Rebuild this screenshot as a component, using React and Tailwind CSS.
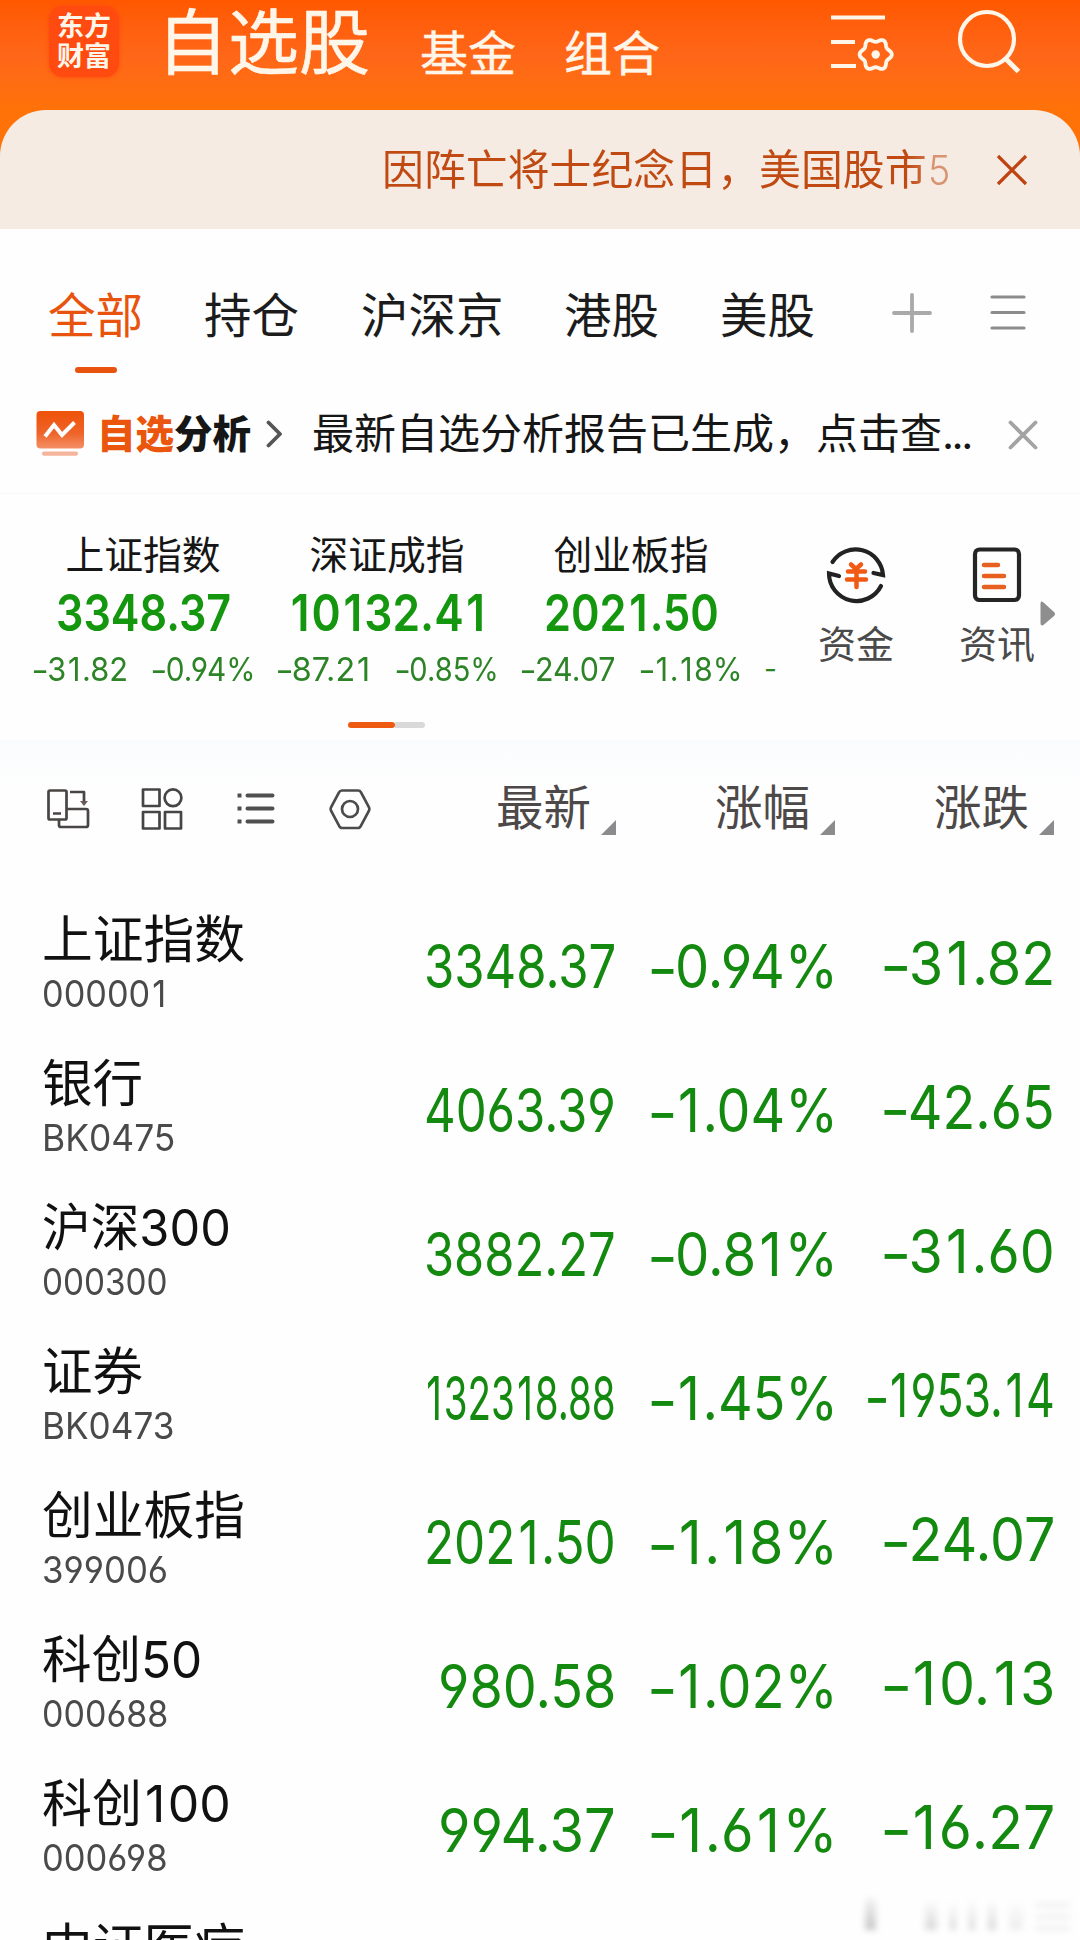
import { useLayoutEffect, useRef, useState } from "react";

/* Text squeezed or stretched horizontally to an exact width. */
function Fit({ width, right, className = "", children }) {
  const ref = useRef(null);
  const [scale, setScale] = useState(1);
  useLayoutEffect(() => {
    setScale(width / ref.current.offsetWidth);
  }, [width]);
  return (
    <span className={`flex ${right ? "justify-end" : "justify-start"} ${className}`} style={{ width }}>
      <span
        ref={ref}
        className={`inline-block shrink-0 whitespace-nowrap ${right ? "origin-right" : "origin-left"}`}
        style={{ transform: `scaleX(${scale})` }}
      >
        {children}
      </span>
    </span>
  );
}

/* A figure with a long, low minus sign and some air around each 1. */
function Num({ value }) {
  return value.split(/(1|-)/).map((part, i) => {
    if (part === "1") return <span key={i} className="pr-[0.05em] pl-[0.06em]">1</span>;
    if (part === "-") return <span key={i} className="inline-block translate-y-[0.035em] scale-x-125">-</span>;
    return part;
  });
}

/* Outline of the six-lobed settings gear. */
const gearPath =
  Array.from({ length: 72 }, (_, i) => {
    const a = (i * Math.PI) / 36;
    const r = 14.4 + 1.7 * Math.cos(6 * a);
    return `${i ? "L" : "M"}${(46.7 + r * Math.cos(a)).toFixed(2)} ${(43.5 + r * Math.sin(a)).toFixed(2)}`;
  }).join("") + "Z";

const indices = [
  { name: "上证指数", value: "3348.37", w: 175, diff: "-31.82", dw: 95, pct: "-0.94%" },
  { name: "深证成指", value: "10132.41", w: 199, diff: "-87.21", dw: 95, pct: "-0.85%" },
  { name: "创业板指", value: "2021.50", w: 175, diff: "-24.07", dw: 95, pct: "-1.18%" },
];

const rows = [
  { name: "上证指数", nw: 203, code: "000001", cw: 126, last: "3348.37", lw: 192, pct: "-0.94%", diff: "-31.82", dw: 172 },
  { name: "银行", nw: 101, code: "BK0475", cw: 133, last: "4063.39", lw: 192, pct: "-1.04%", diff: "-42.65", dw: 172 },
  { name: "沪深300", nw: 189, code: "000300", cw: 126, last: "3882.27", lw: 192, pct: "-0.81%", diff: "-31.60", dw: 172 },
  { name: "证券", nw: 101, code: "BK0473", cw: 133, last: "132318.88", lw: 192, pct: "-1.45%", diff: "-1953.14", dw: 188 },
  { name: "创业板指", nw: 203, code: "399006", cw: 126, last: "2021.50", lw: 192, pct: "-1.18%", diff: "-24.07", dw: 172 },
  { name: "科创50", nw: 160, code: "000688", cw: 126, last: "980.58", lw: 178, pct: "-1.02%", diff: "-10.13", dw: 172 },
  { name: "科创100", nw: 189, code: "000698", cw: 126, last: "994.37", lw: 178, pct: "-1.61%", diff: "-16.27", dw: 172 },
  { name: "中证医疗", nw: 203 },
];

function Header() {
  return (
    <header className="flex h-[110px] items-start text-[#fff6ea]">
      <div className="mt-[6px] ml-[49px] flex h-[71px] w-[70px] flex-col items-center rounded-[14px] bg-[#ff4a10] pt-[6px] text-[27px] leading-[30px] font-bold shadow-[0_0_4px_#ff4a10]">
        <span>东方</span>
        <span>财富</span>
      </div>
      <div className="ml-[38px] w-[224px] text-[71px] leading-[84px] whitespace-nowrap [-webkit-text-stroke:0.6px]">自选股</div>
      <div className="mt-[30px] ml-[39px] w-[100px] text-[48px] leading-[48px] [-webkit-text-stroke:0.4px]">基金</div>
      <div className="mt-[30px] ml-[44px] w-[100px] text-[48px] leading-[48px] [-webkit-text-stroke:0.4px]">组合</div>
      <svg className="mt-[11px] ml-[165px] h-[64px] w-[66px]" viewBox="0 0 66 64" fill="none" stroke="currentColor" strokeWidth="4.200">
        <path d="M2 6.500h54M2 31h24M2 55h25" />
        <path strokeWidth="3.800" strokeLinejoin="round" d={gearPath} />
        <circle cx="46.700" cy="43.500" r="4.200" fill="currentColor" stroke="none" />
      </svg>
      <svg className="mt-[8px] ml-[61px] h-[68px] w-[66px]" viewBox="0 0 66 68" fill="none" stroke="currentColor" strokeWidth="4.200">
        <circle cx="31" cy="31" r="27" />
        <path d="M49 50l13.500 13.500" strokeWidth="5" />
      </svg>
    </header>
  );
}

function Notice() {
  return (
    <div className="flex h-[119px] items-center rounded-t-[46px] bg-[#f5ebe3] leading-[56px] whitespace-nowrap">
      <div className="ml-[382px] w-[546px] bg-linear-to-r from-[#c04a12] from-96% to-[#c04a12]/75 to-100% bg-clip-text text-[41.900px] text-transparent">
        因阵亡将士纪念日，美国股市
      </div>
      <Fit width={22} className="text-[41px] font-light text-[#c04a12]/55">5</Fit>
      <svg className="ml-[46px] h-[32px] w-[32px]" viewBox="0 0 32 32" stroke="#bf4310" strokeWidth="3.200">
        <path d="M2 2l28 28M30 2L2 30" />
      </svg>
    </div>
  );
}

function Tabs() {
  return (
    <nav className="flex h-[144px] items-start pt-[55px] text-[47.500px] leading-[64px] whitespace-nowrap text-[#1c1c1c]">
      <div className="ml-[48px] flex w-[95px] flex-col items-center text-[#e8540e]">
        <span>全部</span>
        <span className="mt-[19px] h-[6px] w-[42px] rounded-full bg-[#e8540e]" />
      </div>
      <span className="ml-[61px] w-[95px]">持仓</span>
      <span className="ml-[62px] w-[143px]">沪深京</span>
      <span className="ml-[60px] w-[95px]">港股</span>
      <span className="ml-[61px] w-[95px]">美股</span>
      <svg className="mt-[9px] ml-[77px] h-[40px] w-[40px]" viewBox="0 0 40 40" stroke="#a9a9a9" strokeWidth="3.800" strokeLinecap="round">
        <path d="M20 2v36M2 20h36" />
      </svg>
      <svg className="mt-[9px] ml-[58px] h-[40px] w-[36px]" viewBox="0 0 36 40" stroke="#8c8c8c" strokeWidth="3.200" strokeLinecap="round">
        <path d="M2 4h32M2 19.500h32M2 35h32" />
      </svg>
    </nav>
  );
}

function Analysis() {
  return (
    <section className="flex h-[121px] items-start border-b border-[#f8f8f8] pt-[33px] leading-[56px] whitespace-nowrap text-[#161616]">
      <svg className="mt-[4px] ml-[36px] h-[50px] w-[49px]" viewBox="0 0 49 50" fill="none">
        <defs>
          <linearGradient id="board" x1="0" y1="0" x2="0" y2="1">
            <stop offset="0" stopColor="#ee5208" />
            <stop offset=".6" stopColor="#ef642a" />
            <stop offset="1" stopColor="#f49067" />
          </linearGradient>
        </defs>
        <rect x=".5" y="1" width="47.500" height="37.500" rx="4" fill="url(#board)" />
        <rect x="6" y="41.500" width="36" height="4.300" rx="2" fill="#f6b49c" />
        <path d="M9 26.500l9-11.500 8 10L38.500 12.500" stroke="#fff" strokeWidth="4" />
      </svg>
      <div className="ml-[12px] w-[154px] text-[38.500px] font-black">
        <span className="text-[#ea560e]">自选</span>分析
      </div>
      <svg className="mt-[14px] ml-[15px] h-[28px] w-[18px]" viewBox="0 0 18 28" fill="none" stroke="#555" strokeWidth="3.800" strokeLinecap="round" strokeLinejoin="round">
        <path d="M2.500 2.500L14 14 2.500 25.500" />
      </svg>
      <div className="ml-[28px] w-[660px] text-[42px]">
        最新自选分析报告已生成，点击查<span className="tracking-[-2.500px]">...</span>
      </div>
      <svg className="mt-[14px] ml-[36px] h-[30px] w-[30px]" viewBox="0 0 30 30" stroke="#a3a3a3" strokeWidth="3.800" strokeLinecap="round">
        <path d="M2.500 2.500l25 25M27.500 2.500l-25 25" />
      </svg>
    </section>
  );
}

function IndexStrip() {
  return (
    <section className="h-[246px]">
      <div className="flex h-[219px] items-start">
        {indices.map((i) => (
          <div key={i.name} className="flex w-[244px] shrink-0 translate-x-[21px] flex-col items-center pt-[37px]">
            <span className="text-[38.800px] leading-[48px] text-[#161616]">{i.name}</span>
            <Fit width={i.w} className="mt-[6px] text-[50.500px] leading-[56px] font-[570] text-[#14960f]"><Num value={i.value} /></Fit>
            <div className="mt-[8px] flex w-[220px] text-[33px] leading-[40px] text-[#2c8427]">
              <Fit width={i.dw}><Num value={i.diff} /></Fit>
              <Fit width={103} className="ml-[24px]"><Num value={i.pct} /></Fit>
            </div>
          </div>
        ))}
        <span className="mt-[155px] ml-[32px] w-[14px] shrink-0 text-[28px] leading-[40px] text-[#2c8427]">-</span>
        <div className="mt-[48px] ml-[39px] flex w-[78px] shrink-0 flex-col items-center text-[38px] leading-[50px] whitespace-nowrap text-[#4a4a4a]">
          <svg className="h-[64px] w-[62px]" viewBox="0 0 62 64" fill="none" stroke="#222" strokeWidth="4.200" strokeLinecap="round">
            <path d="M7.500 20A27.500 27.500 0 0 1 58 33L48.500 31M56 44A27.500 27.500 0 0 1 4 31.500L14 34" />
            <path stroke="#f05a14" strokeWidth="4.500" d="M26 22.500l5 4.500 5-4.500M23 29.500h17M22 37.500h19M31.500 26v19" />
          </svg>
          <span className="mt-[13px]">资金</span>
        </div>
        <div className="mt-[49px] ml-[63px] flex w-[78px] shrink-0 flex-col items-center text-[38px] leading-[50px] whitespace-nowrap text-[#4a4a4a]">
          <svg className="h-[64px] w-[50px]" viewBox="0 0 50 64" fill="none" stroke="#252525" strokeWidth="4.200">
            <rect x="3" y="6.500" width="44" height="50.500" rx="4.500" />
            <path stroke="#e8601f" strokeWidth="4.500" strokeLinecap="round" d="M12 22h14M12 33h20M12 44h20" />
          </svg>
          <span className="mt-[12px]">资讯</span>
        </div>
        <svg className="mt-[106px] ml-[3px] h-[28px] w-[18px] shrink-0" viewBox="0 0 18 28">
          <path d="M1.500 4Q1.500 0 4.500 2.500L15 12Q17 14 15 16L5 24.500Q1.500 27 1.500 23Z" fill="#8e8e8e" />
        </svg>
      </div>
      <div className="ml-[348px] flex h-[27px] translate-y-[9px] items-start">
        <span className="h-[6px] w-[47px] rounded-full bg-[#ee5a12]" />
        <span className="h-[6px] w-[30px] rounded-r-full bg-[#d9d9d9]" />
      </div>
    </section>
  );
}

function SortHead({ label, className }) {
  return (
    <div className={`flex h-[56px] items-start ${className}`}>
      <span className="mt-px w-[95px] whitespace-nowrap">{label}</span>
      <svg className="mt-[41px] ml-[10px] h-[15px] w-[15px]" viewBox="0 0 15 15">
        <path d="M15 0v15H0z" fill="#8b8b8e" />
      </svg>
    </div>
  );
}

function Toolbar() {
  return (
    <div className="flex h-[154px] shrink-0 items-start bg-linear-to-b from-[#f9fbfd] to-[#fefefe] to-30% pt-[39px] text-[47.500px] leading-[56px] text-[#4d4949]">
      <svg className="mt-[8px] ml-[46px] h-[44px] w-[44px]" viewBox="0 0 44 44" fill="none" stroke="#494545" strokeWidth="2.700" strokeLinejoin="round">
        <rect x="2.500" y="3.500" width="18" height="29" rx="1.500" />
        <path d="M7 26.500h8M24 5h14v10M21 22h19q2 0 2 2v14q0 2-2 2H15q-2 0-2-2v-5" />
        <path d="M34 14h8l-4 5z" fill="#6b5a5a" stroke="none" />
      </svg>
      <svg className="mt-[8px] ml-[50px] h-[44px] w-[44px]" viewBox="0 0 44 44" fill="none" stroke="#454545" strokeWidth="2.700" strokeLinejoin="round">
        <path d="M3 2.500h16.500v16.500H3zM3 25h16.500v16.500H3zM25 25H41v16.500H25z" />
        <circle cx="33" cy="10.800" r="8.400" />
      </svg>
      <svg className="mt-[11px] ml-[53px] h-[38px] w-[40px]" viewBox="0 0 40 38" stroke="#4f4f4f" strokeWidth="4">
        <path d="M.5 5.500h4M.5 18.500h4M.5 31.500h4" />
        <path strokeLinecap="round" d="M10.500 5.500h25M10.500 18.500h25M10.500 31.500h25" />
      </svg>
      <svg className="mt-[8px] ml-[51px] h-[44px] w-[44px]" viewBox="0 0 44 44" fill="none" stroke="#4b4b4b" strokeWidth="2.700">
        <path strokeLinejoin="round" d="M14 3.500h16q2 0 3 1.800l8 15q.8 1.700 0 3.400l-8 15q-1 2.300-3 2.300H14q-2 0-3-2.300l-8-15q-.8-1.700 0-3.400l8-15q1-1.800 3-1.800z" />
        <circle cx="22" cy="22" r="8" />
      </svg>
      <SortHead label="最新" className="ml-[124px]" />
      <SortHead label="涨幅" className="ml-[99px]" />
      <SortHead label="涨跌" className="ml-[99px]" />
    </div>
  );
}

function StockRow({ r }) {
  return (
    <div className="flex h-[144px] shrink-0 items-center pl-[42px] text-[60px] leading-[64px] text-[#14890f]">
      <div className="flex h-[110px] w-[381px] flex-col">
        <Fit width={r.nw} className="translate-y-px text-[51px] leading-[55px] text-[#111]"><Num value={r.name} /></Fit>
        {r.code && (
          <Fit width={r.cw} className="text-[37px] leading-[55px] text-[#4a4a4a]"><Num value={r.code} /></Fit>
        )}
      </div>
      {r.last && (
        <>
          <div className="flex w-[193px] justify-end">
            <Fit right width={r.lw}><Num value={r.last} /></Fit>
          </div>
          <div className="flex w-[222px] justify-end">
            <Fit right width={188}><Num value={r.pct} /></Fit>
          </div>
          <div className="mb-[6px] flex w-[217px] justify-end">
            <Fit right width={r.dw}><Num value={r.diff} /></Fit>
          </div>
        </>
      )}
    </div>
  );
}

function Watermark() {
  return (
    <div className="absolute right-[10px] bottom-[10px] flex h-[34px] items-end gap-[13px] opacity-40 blur-[3px]">
      <span className="mr-[36px] h-[32px] w-[11px] bg-linear-to-b from-neutral-200 to-neutral-500" />
      <span className="h-[28px] w-[12px] bg-linear-to-b from-neutral-100 to-neutral-400" />
      <span className="h-[26px] w-[6px] bg-linear-to-b from-neutral-100 to-neutral-400" />
      <span className="h-[28px] w-[6px] bg-linear-to-b from-neutral-100 to-neutral-400" />
      <span className="h-[28px] w-[8px] bg-linear-to-b from-neutral-100 to-neutral-400" />
      <span className="h-[26px] w-[14px] bg-linear-to-b from-neutral-100 to-neutral-300" />
      <span className="flex h-[27px] w-[34px] flex-col justify-between">
        <i className="h-[4px] bg-neutral-300" />
        <i className="h-[4px] bg-neutral-300" />
        <i className="h-[4px] bg-neutral-300" />
      </span>
    </div>
  );
}

export default function App() {
  return (
    <main className="relative h-[1940px] w-[1080px] overflow-hidden bg-[#fefefe] font-['Inter','Noto_Sans_CJK_SC',sans-serif] [font-feature-settings:'cv03','cv04']">
      <div className="bg-linear-to-b from-[#ff5800] via-[#ff6718] via-25% to-[#ff7208] to-48%">
        <Header />
        <Notice />
      </div>
      <Tabs />
      <Analysis />
      <IndexStrip />
      <Toolbar />
      {rows.map((r) => (
        <StockRow key={r.name} r={r} />
      ))}
      <Watermark />
    </main>
  );
}
